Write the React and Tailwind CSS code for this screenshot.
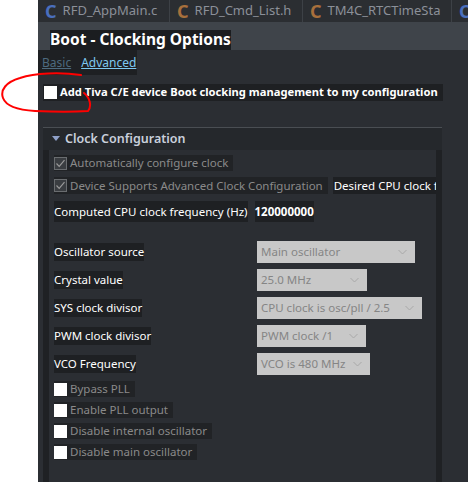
import React from "react";

const F = { fontFamily: '"Noto Sans", "Open Sans", sans-serif' };

function Tab({ color, name, last }) {
  return (
    <div className={"flex items-center h-full pl-[7px] " + (last ? "" : "border-r border-[#3d4146]")}>
      <span className={"font-bold text-[18px] leading-none mr-[6px] " + color}>C</span>
      <span className="text-[13px] text-[#8b9099] whitespace-nowrap">{name}</span>
    </div>
  );
}

function Check({ checked, disabled }) {
  if (disabled && checked) {
    return (
      <div className="w-[13px] h-[13px] border border-[#6a6d70] bg-[#3a3d41] flex items-center justify-center shrink-0">
        <svg width="11" height="11" viewBox="0 0 11 11">
          <path d="M1.5 5.5 L4.2 8.3 L9.5 2.2" fill="none" stroke="#9a9a9a" strokeWidth="1.2" />
        </svg>
      </div>
    );
  }
  return <div className="w-[13px] h-[13px] bg-white shrink-0" />;
}

function Select({ w, text }) {
  return (
    <div className={"h-[22px] bg-[#c8c8c8] flex items-center justify-between pl-[4px] pr-[8px] " + w}>
      <span className="text-[11.5px] text-[#858585] whitespace-nowrap">{text}</span>
      <svg width="9" height="6" viewBox="0 0 9 6">
        <path d="M0.5 1 L4.5 5 L8.5 1" fill="none" stroke="#a8a8a8" strokeWidth="1" />
      </svg>
    </div>
  );
}

function Label({ children }) {
  return (
    <span className="bg-[#1e2023] text-white text-[11.5px] leading-[18px] whitespace-nowrap">{children}</span>
  );
}

function CheckRow({ text, checked }) {
  return (
    <div className="flex items-center h-[16px]">
      <div className="flex items-center bg-[#212326] h-[16px] pr-[5px]">
        <Check checked={checked} disabled />
        <span className="ml-[3px] text-[11.5px] text-[#8a8a8a] whitespace-nowrap">{text}</span>
      </div>
    </div>
  );
}

export default function App() {
  const selects = [
    ["Oscillator source", "w-[158px]", "Main oscillator"],
    ["Crystal value", "w-[110px]", "25.0 MHz"],
    ["SYS clock divisor", "w-[165px]", "CPU clock is osc/pll / 2.5"],
    ["PWM clock divisor", "w-[109px]", "PWM clock /1"],
    ["VCO Frequency", "w-[113px]", "VCO is 480 MHz"],
  ];
  return (
    <div className="relative w-[468px] h-[482px] flex bg-white overflow-hidden" style={F}>
      <div className="w-[38px] shrink-0 bg-white" />
      <div className="flex-1 flex flex-col bg-[#2b2e33] overflow-hidden">
        {/* tabs */}
        <div className="h-[22px] flex bg-[#2b2e32] shrink-0">
          <div className="w-[132px] shrink-0 h-full"><Tab color="text-[#4a6fbd]" name="RFD_AppMain.c" /></div>
          <div className="w-[133px] shrink-0 h-full"><Tab color="text-[#a8703c]" name="RFD_Cmd_List.h" /></div>
          <div className="w-[149px] shrink-0 h-full overflow-hidden"><Tab color="text-[#a8703c]" name="TM4C_RTCTimeSta" /></div>
          <div className="flex-1 h-full overflow-hidden"><Tab color="text-[#4a6fbd]" name="" last /></div>
        </div>
        {/* title band */}
        <div className="h-[28px] bg-[#3f444a] shrink-0 flex items-end pl-[12px]">
          <div className="bg-[#1b1d20] h-[20px] flex items-center">
            <span className="text-white font-bold text-[15.5px] leading-none whitespace-nowrap">Boot - Clocking Options</span>
          </div>
        </div>
        {/* basic / advanced */}
        <div className="flex">
          <div className="bg-[#1e2023] h-[25px] w-[99px] flex items-center pl-[4px] gap-[10px] text-[12px]">
            <span className="text-[#4d6a7e] underline">Basic</span>
            <span className="text-[#7ec8f0] underline">Advanced</span>
          </div>
        </div>
        {/* main checkbox */}
        <div className="flex mt-[9px] pl-[5px]">
          <div className="bg-[#1e2023] h-[17px] flex items-center pl-[1px] pr-[5px]">
            <Check />
            <span className="ml-[3px] text-white font-bold text-[11.2px] whitespace-nowrap">Add Tiva C/E device Boot clocking management to my configuration</span>
          </div>
        </div>
        {/* panel */}
        <div className="mt-[26px] ml-[5px] w-[399px] flex-1 flex flex-col border-t border-[#4a4e53] bg-[#1f2124]">
          <div className="h-[22px] bg-[#25282c] flex items-center pl-[9px] shrink-0">
            <svg width="8" height="6" viewBox="0 0 8 6"><path d="M0 0 L8 0 L4 5 Z" fill="#8fa0c8" /></svg>
            <span className="ml-[5px] text-[12.5px] font-semibold text-[#c9d0dc]">Clock Configuration</span>
          </div>
          <div className="mx-[6px] flex-1 bg-[#2b2e33] flex flex-col pt-[5px] pl-[5px] overflow-hidden">
            <CheckRow text="Automatically configure clock" checked />
            <div className="mt-[6px] flex items-center h-[17px]">
              <div className="flex items-center bg-[#212326] h-[17px] pr-[5px]">
                <Check checked disabled />
                <span className="ml-[3px] text-[11.5px] text-[#8a8a8a] whitespace-nowrap">Device Supports Advanced Clock Configuration</span>
              </div>
              <div className="ml-[5px] flex-1 min-w-0 overflow-hidden">
                <span className="bg-[#1e2023] text-white text-[11.5px] whitespace-nowrap h-[17px] leading-[17px] pl-[1px] block">Desired CPU clock frequency</span>
              </div>
            </div>
            <div className="mt-[7px] flex items-center h-[21px]">
              <span className="bg-[#1e2023] text-white text-[11.5px] leading-[21px] whitespace-nowrap">Computed CPU clock frequency (Hz)</span>
              <span className="ml-[7px] bg-[#1e2023] text-white font-bold text-[11.5px] leading-[21px]">120000000</span>
            </div>
            <div className="mt-[19px] flex flex-col gap-[6px]">
              {selects.map(([l, w, t]) => (
                <div key={l} className="grid grid-cols-[203px_auto] items-center h-[22px]">
                  <div className="flex"><Label>{l}</Label></div>
                  <Select w={w} text={t} />
                </div>
              ))}
            </div>
            <div className="mt-[6px] flex flex-col gap-[5px]">
              <CheckRow text="Bypass PLL" />
              <CheckRow text="Enable PLL output" />
              <CheckRow text="Disable internal oscillator" />
              <CheckRow text="Disable main oscillator" />
            </div>
          </div>
        </div>
      </div>
      {/* red annotation */}
      <svg className="absolute left-0 top-[70px]" width="100" height="50" viewBox="0 0 100 50">
        <path d="M81 5 C 60 2, 35 3, 20 8 C 6 12, 0 20, 3 28 C 6 36, 18 40, 35 41 C 55 42, 75 42, 88 41 C 92 36, 90 28, 84 23"
          fill="none" stroke="#ff0000" strokeWidth="2" strokeLinecap="round" />
      </svg>
    </div>
  );
}
